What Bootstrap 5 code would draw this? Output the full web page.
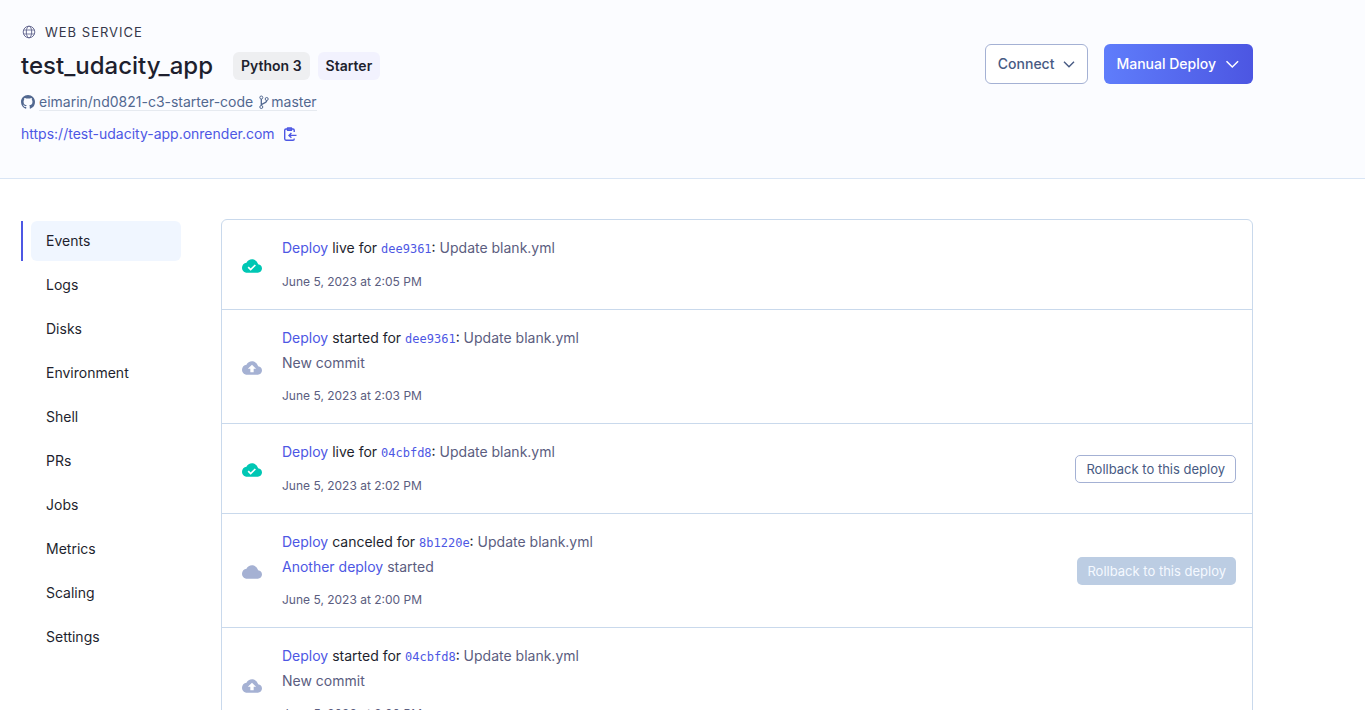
<!DOCTYPE html>
<html lang="en">
<head>
<meta charset="utf-8">
<meta name="viewport" content="width=device-width, initial-scale=1">
<title>test_udacity_app · Web Service</title>
<link href="https://cdn.jsdelivr.net/npm/bootstrap@5.3.0/dist/css/bootstrap.min.css" rel="stylesheet">
<style>
  body { font-family: Inter, "Liberation Sans", sans-serif; font-size: 14px; line-height: 24px; color: #1e1f2e; background: #fff; }
  a { color: #4d57e4; text-decoration: none; }
  svg { flex: none; display: block; }
  .page-wrap { max-width: 1274px; padding: 0 21px; }
  .service-head { background: #fbfcff; border-bottom: 1px solid #d9e5f5; }
  .service-head .page-wrap { padding-top: 20px; padding-bottom: 32px; }
  .kind { font-size: 13px; letter-spacing: 1px; color: #35374a; padding-left: 1px; gap: 9px; }
  .kind svg { color: #6a6d94; }
  .title-row { margin-top: 6px; }
  .service-title { font-size: 24px; line-height: 32px; font-weight: 500; }
  .tag { font-weight: 600; line-height: 20px; padding: 4px 8px; border-radius: 6px; background: #eeeff1; }
  .tag-plan { background: #f2f2fe; }
  .repo, .repo a { color: #526890; line-height: 16px; }
  .repo { margin: 12px 0 11px; }
  .repo a { border-bottom: 1px solid #e6eaf0; gap: 2px; }
  .act { height: 40px; font-size: 14px; font-weight: 500; line-height: 24px; border-radius: 6px; padding: 0 12px; gap: 9px; }
  .act-plain { color: #475a83; background: #fff; border: 1px solid #a4b1d4; }
  .act-main { color: #fff; border: 0; background: linear-gradient(90deg, #5f7dfb, #4c56e2); }
  .side { width: 160px; gap: 4px; padding-top: 2px; }
  .side a { color: #1e1f2e; line-height: 24px; padding: 8px 15px; border-radius: 6px; }
  .side li { padding-left: 8px; border-left: 2px solid transparent; }
  .side .current { border-left-color: #4d57e4; }
  .side .current a { background: #f0f6ff; }
  .body-row { gap: 40px; padding-top: 40px; }
  .events { border: 1px solid #c9d9ec; border-radius: 6px; }
  .event { padding: 16px 16px 16px 20px; gap: 20px; color: #5b5d80; }
  .event + .event { border-top: 1px solid #c9d9ec; }
  .event b { font-weight: 400; color: #1e1f2e; }
  .event > svg { margin-top: 3px; }
  .event time { font-size: 12px; line-height: 18px; margin: 12px 0 2px; }
  .hash { font-family: "DejaVu Sans Mono", monospace; font-size: 12px; }
  .cloud-ok { color: #00c7b4; }
  .cloud-idle { color: #a5b1d3; }
  .roll { height: 28px; font-size: 13px; line-height: 20px; padding: 0 10px; border-radius: 5px; color: #475a83; background: #fff; border: 1px solid #a4b1d4; }
  .roll:disabled { color: #f5f9ff; background: #bccde3; border: 0; }
</style>
</head>
<body class="vh-100 overflow-hidden">
<svg width="0" height="0" class="position-absolute" aria-hidden="true">
  <symbol id="i-ok" viewBox="0 0 24 24"><path fill="currentColor" d="M19.35 10.04C18.67 6.59 15.64 4 12 4 9.11 4 6.6 5.64 5.35 8.04 2.34 8.36 0 10.91 0 14c0 3.31 2.69 6 6 6h13c2.76 0 5-2.24 5-5 0-2.64-2.05-4.78-4.65-4.96z"/><path d="M7.4 13.4l3 3 5.6-5.6" fill="none" stroke="#fff" stroke-width="2"/></symbol>
  <symbol id="i-up" viewBox="0 0 24 24"><path fill="currentColor" d="M19.35 10.04C18.67 6.59 15.64 4 12 4 9.11 4 6.6 5.64 5.35 8.04 2.34 8.36 0 10.91 0 14c0 3.31 2.69 6 6 6h13c2.76 0 5-2.24 5-5 0-2.64-2.05-4.78-4.65-4.96z"/><path fill="#fff" d="M14 13v4h-4v-4H7l5-5 5 5z"/></symbol>
  <symbol id="i-cloud" viewBox="0 0 24 24"><path fill="currentColor" d="M19.35 10.04C18.67 6.59 15.64 4 12 4 9.11 4 6.6 5.64 5.35 8.04 2.34 8.36 0 10.91 0 14c0 3.31 2.69 6 6 6h13c2.76 0 5-2.24 5-5 0-2.64-2.05-4.78-4.65-4.96z"/></symbol>
</svg>

<header class="service-head">
  <div class="page-wrap d-flex justify-content-between">
    <div>
      <div class="kind d-flex align-items-center">
        <svg width="14" height="14" viewBox="0 0 14 14" fill="none" stroke="currentColor"><circle cx="7" cy="7" r="5.8"/><ellipse cx="7" cy="7" rx="2.7" ry="5.8"/><path d="M1.6 5h10.8M1.6 9h10.8" stroke-width=".9"/></svg>
        WEB SERVICE
      </div>
      <div class="title-row d-flex align-items-center">
        <h1 class="service-title mb-0 me-3 pe-1">test_udacity_app</h1>
        <span class="tag me-2">Python 3</span>
        <span class="tag tag-plan">Starter</span>
      </div>
      <div class="repo d-flex">
        <svg width="14" height="16" viewBox="0 0 16 16" class="me-1"><path fill="currentColor" d="M8 0C3.58 0 0 3.58 0 8c0 3.54 2.29 6.53 5.47 7.59.4.07.55-.17.55-.38 0-.19-.01-.82-.01-1.49-2.01.37-2.53-.49-2.69-.94-.09-.23-.48-.94-.82-1.13-.28-.15-.68-.52-.01-.53.63-.01 1.08.58 1.23.82.72 1.21 1.87.87 2.33.66.07-.52.28-.87.51-1.07-1.78-.2-3.64-.89-3.64-3.95 0-.87.31-1.59.82-2.15-.08-.2-.36-1.02.08-2.12 0 0 .67-.21 2.2.82.64-.18 1.32-.27 2-.27s1.36.09 2 .27c1.53-1.04 2.2-.82 2.2-.82.44 1.1.16 1.92.08 2.12.51.56.82 1.27.82 2.15 0 3.07-1.87 3.75-3.65 3.95.29.25.54.73.54 1.48 0 1.07-.01 1.93-.01 2.2 0 .21.15.46.55.38A8.01 8.01 0 0 0 16 8c0-4.42-3.58-8-8-8z"/></svg>
        <a href="#" class="d-flex"><span class="me-1">eimarin/nd0821-c3-starter-code</span>
          <svg width="10" height="16" viewBox="0 0 10 16" fill="none" stroke="currentColor"><circle cx="2.3" cy="3.5" r="1.5"/><circle cx="7.7" cy="5" r="1.5"/><circle cx="2.3" cy="13" r="1.5"/><path d="M2.3 5v6.5M7.7 6.5c0 3-5 2.500-5.400 4.500" stroke-width="1.300"/></svg>
          <span>master</span></a>
      </div>
      <div class="d-flex align-items-center">
        <a href="#">https://test-udacity-app.onrender.com</a>
        <button type="button" class="btn p-0 border-0 ms-2" aria-label="Copy URL">
          <svg width="14" height="14" viewBox="0 0 14 14" fill="none" stroke="#4d57e4" stroke-width="1.400"><path d="M11.200 5V3.200q0-1.200-1.200-1.200H3Q1.700 2 1.700 3.200v8.600Q1.700 13.200 3 13.200h7q1.200 0 1.200-1.200v-.6"/><path d="M4.500 1h4v2.200h-4z" stroke-linejoin="round"/><path d="M13.500 8.400H6M8.400 6L6 8.400l2.400 2.400"/></svg>
        </button>
      </div>
    </div>
    <div class="d-flex gap-3 mt-4">
      <button type="button" class="act act-plain d-flex align-items-center">Connect
        <svg width="12" height="14" viewBox="0 0 12 14" fill="none" stroke="currentColor" stroke-width="1.400"><path d="M1 4.700L6 9.700l5-5"/></svg></button>
      <button type="button" class="act act-main d-flex align-items-center">Manual Deploy
        <svg width="16" height="14" viewBox="0 0 16 14" fill="none" stroke="currentColor" stroke-width="1.500"><path d="M1.500 4.200L7.300 10l5.800-5.800"/></svg></button>
    </div>
  </div>
</header>

<div class="page-wrap body-row d-flex align-items-start">
  <nav class="flex-shrink-0" aria-label="Service">
    <ul class="side list-unstyled d-flex flex-column mb-0">
      <li class="current"><a href="#" class="d-block" aria-current="page">Events</a></li>
      <li><a href="#" class="d-block">Logs</a></li>
      <li><a href="#" class="d-block">Disks</a></li>
      <li><a href="#" class="d-block">Environment</a></li>
      <li><a href="#" class="d-block">Shell</a></li>
      <li><a href="#" class="d-block">PRs</a></li>
      <li><a href="#" class="d-block">Jobs</a></li>
      <li><a href="#" class="d-block">Metrics</a></li>
      <li><a href="#" class="d-block">Scaling</a></li>
      <li><a href="#" class="d-block">Settings</a></li>
    </ul>
  </nav>
  <main class="events flex-grow-1">
    <div class="event d-flex align-items-center">
      <svg class="cloud-ok" width="20" height="20"><use href="#i-ok"/></svg>
      <div class="flex-grow-1">
        <div><a href="#">Deploy</a> <b>live for</b> <a href="#" class="hash">dee9361</a><b>:</b> Update blank.yml</div>
        <time class="d-block">June 5, 2023 at 2:05 PM</time>
      </div>
    </div>
    <div class="event d-flex align-items-center">
      <svg class="cloud-idle" width="20" height="20"><use href="#i-up"/></svg>
      <div class="flex-grow-1">
        <div><a href="#">Deploy</a> <b>started for</b> <a href="#" class="hash">dee9361</a><b>:</b> Update blank.yml</div>
        <div>New commit</div>
        <time class="d-block">June 5, 2023 at 2:03 PM</time>
      </div>
    </div>
    <div class="event d-flex align-items-center">
      <svg class="cloud-ok" width="20" height="20"><use href="#i-ok"/></svg>
      <div class="flex-grow-1">
        <div><a href="#">Deploy</a> <b>live for</b> <a href="#" class="hash">04cbfd8</a><b>:</b> Update blank.yml</div>
        <time class="d-block">June 5, 2023 at 2:02 PM</time>
      </div>
      <button type="button" class="roll">Rollback to this deploy</button>
    </div>
    <div class="event d-flex align-items-center">
      <svg class="cloud-idle" width="20" height="20"><use href="#i-cloud"/></svg>
      <div class="flex-grow-1">
        <div><a href="#">Deploy</a> <b>canceled for</b> <a href="#" class="hash">8b1220e</a><b>:</b> Update blank.yml</div>
        <div><a href="#">Another deploy</a> started</div>
        <time class="d-block">June 5, 2023 at 2:00 PM</time>
      </div>
      <button type="button" class="roll" disabled>Rollback to this deploy</button>
    </div>
    <div class="event d-flex align-items-center">
      <svg class="cloud-idle" width="20" height="20"><use href="#i-up"/></svg>
      <div class="flex-grow-1">
        <div><a href="#">Deploy</a> <b>started for</b> <a href="#" class="hash">04cbfd8</a><b>:</b> Update blank.yml</div>
        <div>New commit</div>
        <time class="d-block">June 5, 2023 at 2:00 PM</time>
      </div>
    </div>
  </main>
</div>
<script src="https://cdn.jsdelivr.net/npm/bootstrap@5.3.0/dist/js/bootstrap.bundle.min.js"></script>
</body>
</html>
